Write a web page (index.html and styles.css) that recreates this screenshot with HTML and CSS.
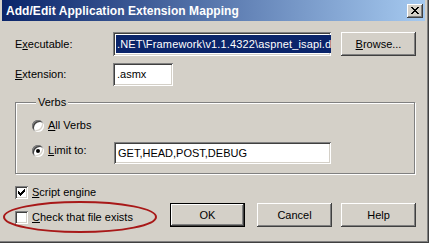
FILE: index.html
```html
<!DOCTYPE html>
<html>
<head>
<meta charset="utf-8">
<link rel="stylesheet" href="styles.css">
</head>
<body>
<div class="window">
  <div class="titlebar">
    <span class="title">Add/Edit Application Extension Mapping</span>
    <span class="close">
      <svg width="8" height="7" viewBox="0 0 8 7" shape-rendering="crispEdges"><path fill="#000" d="M0 0h2v1H0zM6 0h2v1H6zM1 1h2v1H1zM5 1h2v1H5zM2 2h4v1H2zM3 3h2v1H3zM2 4h4v1H2zM1 5h2v1H1zM5 5h2v1H5zM0 6h2v1H0zM6 6h2v1H6z"/></svg>
    </span>
  </div>
  <div class="content">
    <div class="row row-exe">
      <span class="lbl">E<u>x</u>ecutable:</span>
      <div class="field exe"><span class="sel">.NET\Framework\v1.1.4322\aspnet_isapi.dll</span></div>
      <span class="btn browse"><u>B</u>rowse...</span>
    </div>
    <div class="row row-ext">
      <span class="lbl"><u>E</u>xtension:</span>
      <div class="field ext">.asmx</div>
    </div>
    <div class="group">
      <div class="group-title">Verbs</div>
      <div class="opt opt-all">
        <span class="radio"></span>
        <span class="opt-lbl"><u>A</u>ll Verbs</span>
      </div>
      <div class="opt opt-limit">
        <div class="opt-head">
          <span class="radio checked"></span>
          <span class="opt-lbl limit-lbl"><u>L</u>imit to:</span>
        </div>
        <div class="field limit">GET,HEAD,POST,DEBUG</div>
      </div>
    </div>
    <div class="bottom">
      <div class="checks">
        <div class="chk">
          <span class="box">
            <svg width="7" height="7" viewBox="0 0 7 7" shape-rendering="crispEdges"><path fill="#000" d="M6 0h1v1H6zM5 1h2v1H5zM0 2h1v1H0zM4 2h3v1H4zM0 3h2v1H0zM3 3h3v1H3zM0 4h5v1H0zM1 5h3v1H1zM2 6h1v1H2z"/></svg>
          </span>
          <span><u>S</u>cript engine</span>
        </div>
        <div class="chk">
          <span class="box"></span>
          <span><u>C</u>heck that file exists</span>
        </div>
      </div>
      <div class="buttons">
        <span class="btn default">OK</span>
        <span class="btn cancel">Cancel</span>
        <span class="btn help">Help</span>
      </div>
    </div>
  </div>
  <svg class="annot" width="429" height="243" viewBox="0 0 429 243">
    <ellipse cx="80" cy="217" rx="76" ry="15" fill="none" stroke="#a81818" stroke-width="2"/>
  </svg>
</div>
</body>
</html>
```

FILE: styles.css
```css
* { box-sizing: border-box; }
html, body { margin: 0; padding: 0; background: #d4d0c8; }
body {
  font-family: "Liberation Sans", Arial, sans-serif;
  font-size: 11px;
  line-height: 13px;
  color: #000;
}
u { text-decoration: underline; text-underline-offset: 1px; }

.window {
  position: relative;
  width: 429px;
  height: 243px;
  background: #d4d0c8;
  border-right: 1px solid #404040;
  border-bottom: 1px solid #404040;
  box-shadow: inset -1px -1px #808080;
  padding: 0 3px 3px 2px;
  overflow: hidden;
}

.titlebar {
  height: 21px;
  background: linear-gradient(to right, #0a246a, #a6caf0);
  display: flex;
  align-items: center;
  justify-content: space-between;
  padding: 0 2px 0 4px;
}
.title {
  color: #fff;
  font-weight: bold;
  font-size: 12px;
  letter-spacing: 0.05px;
  white-space: nowrap;
  padding-top: 1px;
}
.close {
  width: 16px;
  height: 14px;
  background: #d4d0c8;
  box-shadow: inset -1px -1px #404040, inset 1px 1px #fff, inset -2px -2px #808080;
  display: flex;
  align-items: center;
  justify-content: center;
  padding-right: 1px;
}
.close svg { display: block; }

.content {
  padding: 11px 0 0 13px;
  display: flex;
  flex-direction: column;
}

.row { display: flex; align-items: center; }
.lbl { width: 98px; white-space: nowrap; }

.field {
  background: #fff;
  box-shadow: inset 1px 1px #808080, inset -1px -1px #fff, inset 2px 2px #404040, inset -2px -2px #d4d0c8;
  padding: 0 2px;
  display: flex;
  align-items: center;
  overflow: hidden;
  white-space: nowrap;
}
.exe { width: 218px; height: 24px; padding: 0 3px 0 3px; }
.sel {
  background: #0a246a;
  color: #fff;
  line-height: 18px;
  height: 18px;
  padding-left: 1px;
  letter-spacing: 0.15px;
}
.ext { width: 60px; height: 23px; padding-left: 4px; }
.limit { width: 217px; height: 22px; padding-left: 4px; }

.btn {
  display: flex;
  align-items: center;
  justify-content: center;
  width: 75px;
  height: 24px;
  background: #d4d0c8;
  box-shadow: inset -1px -1px #404040, inset 1px 1px #fff, inset -2px -2px #808080;
  white-space: nowrap;
}
.browse { margin-left: 10px; }

.row-ext { margin-top: 7px; }

.group {
  margin-top: 16px;
  width: 400px;
  border: 1px solid #808080;
  box-shadow: inset 1px 1px #fff, 1px 1px 0 #fff;
  padding: 0 0 9px 16px;
}
.group-title {
  width: max-content;
  margin: -7px 0 0 4px;
  padding: 0 2px;
  background: #d4d0c8;
}
.opt { display: flex; align-items: center; }
.opt-all { margin-top: 10px; height: 13px; }
.opt-limit { margin-top: 10px; align-items: flex-start; }
.opt-head { display: flex; align-items: center; height: 13px; margin-top: 2px; }
.radio {
  position: relative;
  width: 12px;
  height: 12px;
  border-radius: 50%;
  background: #fff;
  box-shadow: inset 1px 1px #808080, inset -1px -1px #fff, inset 2px 2px #404040, inset -2px -2px #d4d0c8;
  flex: none;
}
.radio.checked::after {
  content: "";
  position: absolute;
  left: 4px;
  top: 4px;
  width: 4px;
  height: 4px;
  border-radius: 50%;
  background: #000;
}
.opt-lbl { margin-left: 4px; white-space: nowrap; }
.limit-lbl { width: 66px; }

.bottom { display: flex; }
.checks { display: flex; flex-direction: column; gap: 12px; margin-top: 12px; width: 155px; }
.chk { display: flex; align-items: center; height: 13px; white-space: nowrap; }
.box {
  width: 13px;
  height: 13px;
  background: #fff;
  box-shadow: inset 1px 1px #808080, inset -1px -1px #fff, inset 2px 2px #404040, inset -2px -2px #d4d0c8;
  display: flex;
  align-items: center;
  justify-content: center;
  margin-right: 4px;
  flex: none;
}
.box svg { display: block; }

.buttons { display: flex; margin-top: 29px; }
.btn.default { border: 1px solid #000; }
.cancel { margin-left: 12px; }
.help { margin-left: 9px; }

.annot { position: absolute; left: 0; top: 0; pointer-events: none; }
```
